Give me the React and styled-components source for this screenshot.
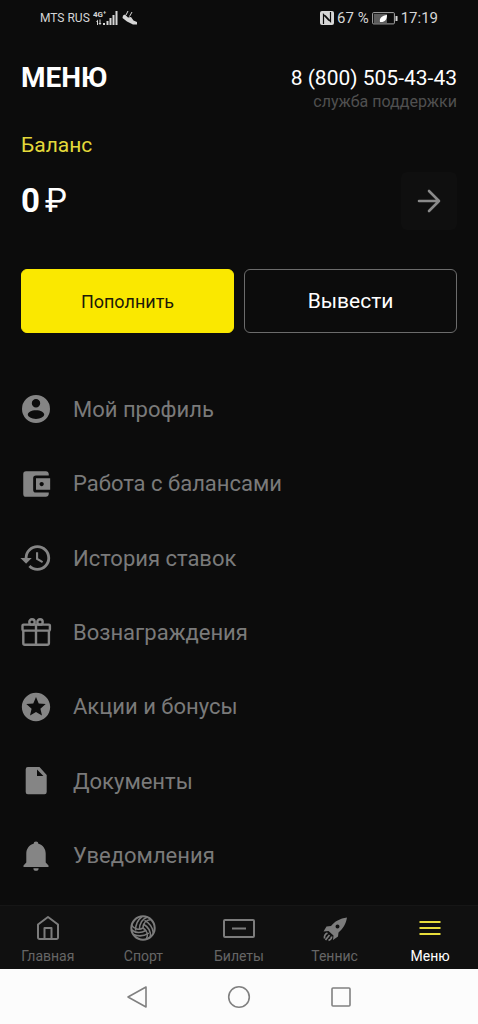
import styled, { createGlobalStyle } from "styled-components";
import { MdAccountBalanceWallet, MdHistory, MdStars } from "react-icons/md";

const colors = {
  page: "#0c0c0c",
  bar: "#101010",
  line: "#161616",
  accent: "#fae800",
  white: "#ffffff",
  status: "#d6d6d6",
  grey: "#7a7a7a",
  icon: "#858585",
  dim: "#505050",
  system: "#fcfcfc",
};

const GlobalStyle = createGlobalStyle`
  *, *::before, *::after {
    box-sizing: border-box;
  }

  body {
    margin: 0;
    background: ${colors.page};
    font-family: Roboto, "Noto Sans", sans-serif;
  }

  button {
    font-family: inherit;
    cursor: pointer;
  }
`;

// Component Styles

const Screen = styled.div`
  min-height: 100vh;
  display: flex;
  flex-direction: column;
  background: ${colors.page};
  color: ${colors.white};
`;

const StatusBar = styled.div`
  height: 36px;
  padding: 0 40px;
  display: flex;
  align-items: center;
  justify-content: space-between;
  color: ${colors.status};
`;

const StatusGroup = styled.div`
  display: flex;
  align-items: center;
  gap: 3px;
`;

const Carrier = styled.span`
  font-size: 12px;
`;

const StatusText = styled.span`
  font-size: 15px;
`;

const Content = styled.main`
  flex: 1;
  display: flex;
  flex-direction: column;
  padding: 25px 21px 12px;
`;

const Header = styled.header`
  display: flex;
  align-items: flex-start;
  justify-content: space-between;
`;

const Title = styled.h1`
  margin: 0;
  font-size: 28px;
  line-height: 34px;
  font-weight: 700;
`;

const Support = styled.div`
  display: flex;
  flex-direction: column;
  align-items: flex-end;
`;

const Phone = styled.a`
  font-size: 21px;
  line-height: 34px;
  color: ${colors.white};
  text-decoration: none;
`;

const SupportLabel = styled.span`
  font-size: 16px;
  line-height: 14px;
  color: ${colors.dim};
`;

const BalanceLabel = styled.h2`
  margin: 24px 0 0;
  font-size: 21px;
  line-height: 24px;
  font-weight: 400;
  color: #e4d93a;
`;

const BalanceRow = styled.div`
  display: flex;
  align-items: center;
  justify-content: space-between;
  margin-top: 15px;
`;

const Amount = styled.div`
  display: flex;
  align-items: center;
  gap: 5px;
  font-size: 33px;
  line-height: 40px;
  font-weight: 700;
`;

const Currency = styled.span`
  font-weight: 400;
`;

const ArrowButton = styled.button`
  width: 56px;
  height: 58px;
  padding: 0;
  border: none;
  border-radius: 6px;
  background: #0f0f0f;
  color: #8a8a8a;
  display: flex;
  align-items: center;
  justify-content: center;
`;

const Actions = styled.div`
  display: grid;
  grid-template-columns: 1fr 1fr;
  gap: 10px;
  margin-top: 39px;
`;

const ActionButton = styled.button`
  height: 64px;
  border-radius: 6px;
  border: 1px solid ${(props) => (props.$filled ? colors.accent : "#6c6c6c")};
  background: ${(props) => (props.$filled ? colors.accent : "transparent")};
  color: ${(props) => (props.$filled ? "#1c1a08" : colors.white)};
  font-size: ${(props) => (props.$filled ? "18px" : "21px")};
`;

const MenuList = styled.nav`
  flex: 1;
  display: flex;
  flex-direction: column;
  margin-top: 39px;
`;

const MenuLink = styled.a`
  flex: 1;
  min-height: 56px;
  display: flex;
  align-items: center;
  gap: 20px;
  margin-left: -2px;
  font-size: 22px;
  color: ${colors.grey};
  text-decoration: none;

  svg {
    color: ${colors.icon};
  }
`;

const TabBar = styled.nav`
  display: grid;
  grid-template-columns: repeat(5, 1fr);
  height: 64px;
  background: ${colors.bar};
  border-top: 1px solid ${colors.line};
`;

const Tab = styled.a`
  display: flex;
  flex-direction: column;
  align-items: center;
  padding-top: 8px;
  gap: 6px;
  font-size: 14px;
  line-height: 16px;
  color: ${(props) => (props.$active ? colors.white : "#666666")};
  text-decoration: none;

  svg {
    color: ${(props) => (props.$active ? "#e8de3c" : "#7c7c7c")};
  }
`;

const SystemBar = styled.div`
  height: 55px;
  display: flex;
  align-items: center;
  justify-content: center;
  gap: 74px;
  background: ${colors.system};
`;

const SystemButton = styled.button`
  width: 28px;
  height: 28px;
  padding: 0;
  border: none;
  background: none;
  color: #808080;
`;

// Icons

const MenuIcon = ({ children }) => (
  <svg width="34" height="34" viewBox="0 0 34 34" fill="currentColor" aria-hidden="true">
    {children}
  </svg>
);

const LineIcon = ({ children, width = 28 }) => (
  <svg
    width={width}
    height="28"
    viewBox={`0 0 ${width} 28`}
    fill="none"
    stroke="currentColor"
    strokeWidth="2"
    strokeLinejoin="round"
    aria-hidden="true"
  >
    {children}
  </svg>
);

const ProfileIcon = () => (
  <MenuIcon>
    <path
      fillRule="evenodd"
      d="M17 3a14 14 0 1 0 0 28a14 14 0 1 0 0-28zM17 7.1a4.2 4.2 0 1 1 0 8.4a4.2 4.2 0 1 1 0-8.4zM17 18.3c4.6 0 8.2 2 8.2 4.3s-3.6 4.3-8.2 4.3s-8.2-2-8.2-4.3s3.6-4.3 8.2-4.3z"
    />
  </MenuIcon>
);

const GiftIcon = () => (
  <MenuIcon>
    <g fill="none" stroke="currentColor" strokeWidth="2.4">
      <rect x="3.5" y="9.6" width="27.4" height="6" rx="1" />
      <path d="M4.3 15.6V28.3a1.5 1.5 0 0 0 1.5 1.5H28.4a1.5 1.5 0 0 0 1.5-1.5V15.6M17 9.6V30" />
      <circle cx="13" cy="6.9" r="2.7" />
      <circle cx="21" cy="6.9" r="2.7" />
    </g>
  </MenuIcon>
);

const DocumentIcon = () => (
  <MenuIcon>
    <path
      fillRule="evenodd"
      d="M9 3H20.5L27.7 11V28a2.2 2.2 0 0 1-2.2 2.2H9A2.2 2.2 0 0 1 6.7 28V5.2A2.2 2.2 0 0 1 9 3zM18 5.4V12H24.4z"
    />
  </MenuIcon>
);

const BellIcon = () => (
  <MenuIcon>
    <path d="M17 2.5a2.4 2.4 0 0 1 2.4 2.3C23.8 6 26.7 9.8 26.7 14.5V23.5L29.5 26.6V28H4.5V26.6L7.3 23.5V14.5C7.3 9.8 10.2 6 14.6 4.8A2.4 2.4 0 0 1 17 2.5z" />
    <path d="M14.4 29.2H19.6A2.6 2.6 0 0 1 14.4 29.2z" />
  </MenuIcon>
);

const HomeIcon = () => (
  <LineIcon>
    <path d="M14 3L24 10.5V23.5a1.5 1.5 0 0 1-1.5 1.5H5.5A1.5 1.5 0 0 1 4 23.5V10.5z" />
    <path d="M10.5 25V14H17.5V25" />
  </LineIcon>
);

const BallIcon = () => (
  <LineIcon>
    <circle cx="14" cy="14" r="11.7" />
    <g strokeWidth="1.6">
      {[0, 120, 240].map((angle) => (
        <g key={angle} transform={`rotate(${angle} 14 14)`}>
          <path d="M14 14C14 9.5 17 6 22 5.5" />
          <path d="M10.4 15.8C10.4 9.5 13 5 18.5 3" />
          <path d="M6.6 16.5C6.4 11 8 6.5 13 2.6" />
        </g>
      ))}
    </g>
  </LineIcon>
);

const TicketIcon = () => (
  <LineIcon width={34}>
    <rect x="2" y="6" width="30" height="17" rx="1" />
    <path d="M10 14.5H24" />
  </LineIcon>
);

const RocketIcon = () => (
  <svg width="28" height="28" viewBox="0 0 28 28" fill="currentColor" aria-hidden="true">
    <path
      fillRule="evenodd"
      d="M26 3.5C19 4.5 13.5 7.5 10 12L5.5 12.5L2.5 17.5L7.5 17L12.5 21.500L12 26L17 22.5L17.5 18.5C22 14.5 25 10 26 3.5zM16.500 10.500a2 2 0 1 1 0 4a2 2 0 1 1 0-4z"
    />
    <path
      d="M6.500 19Q3 20.500 3.500 24.500M8.500 21L4.500 26M10.500 22.500Q11 25 7.500 26.500"
      fill="none"
      stroke="currentColor"
      strokeWidth="1.700"
    />
  </svg>
);

const BurgerIcon = () => (
  <LineIcon>
    <path d="M3.5 8H24.5M3.5 14H24.5M3.5 20H24.5" strokeWidth="2.2" />
  </LineIcon>
);

const ArrowIcon = () => (
  <svg
    width="28"
    height="28"
    viewBox="0 0 28 28"
    fill="none"
    stroke="currentColor"
    strokeWidth="2.6"
    strokeLinecap="round"
    strokeLinejoin="round"
    aria-hidden="true"
  >
    <path d="M4 14H24M14 4L24 14L14 24" />
  </svg>
);

const SignalIcon = () => (
  <svg width="26" height="16" viewBox="0 0 26 16" fill="currentColor" aria-hidden="true">
    <text x="0" y="7" fontSize="8" fontWeight="700">4G⁺</text>
    <path d="M3 12L5 9.5V15H4V12zM7 15L5.5 13H6.5V9.500H7.500V13H8.500zM10 13H12V15H10zM13.5 11H15.5V15H13.5zM16.5 8H18.5V15H16.5zM19.5 5H21.5V15H19.5zM22.5 1H24.500V15H22.500z" />
  </svg>
);

const ShoeIcon = () => (
  <svg width="16" height="14" viewBox="0 0 16 14" fill="currentColor" aria-hidden="true">
    <path d="M1 4.5L3 3.500L6 6.500L9 6L11.500 9.500L15 11V13.500H11L5 10.500L0.500 7z" />
    <path d="M4 4L6 0M7.500 5.500L10 1" stroke="currentColor" fill="none" />
  </svg>
);

const NfcIcon = () => (
  <svg width="14" height="14" viewBox="0 0 14 14" aria-hidden="true">
    <rect width="14" height="14" rx="2" fill="currentColor" />
    <path
      d="M3.5 13V3.500L9 9.500M5 4.500L10.500 10.500V1"
      fill="none"
      stroke={colors.page}
      strokeWidth="1.2"
    />
  </svg>
);

const BatteryIcon = () => (
  <svg width="26" height="13" viewBox="0 0 26 13" fill="none" aria-hidden="true">
    <rect x="0.6" y="0.6" width="21.8" height="11.3" rx="1" stroke="#a8a8a8" />
    <path d="M2 2H15V11H2z" fill="#5c5c5c" />
    <path d="M8 10C7 6 10 3.5 15 3C15 8 12.5 10.5 8 10z" fill={colors.white} />
    <path d="M24.5 4V9" stroke="currentColor" strokeWidth="2" />
  </svg>
);

const menuItems = [
  { label: "Мой профиль", icon: <ProfileIcon /> },
  { label: "Работа с балансами", icon: <MdAccountBalanceWallet size={34} /> },
  { label: "История ставок", icon: <MdHistory size={34} /> },
  { label: "Вознаграждения", icon: <GiftIcon /> },
  { label: "Акции и бонусы", icon: <MdStars size={34} /> },
  { label: "Документы", icon: <DocumentIcon /> },
  { label: "Уведомления", icon: <BellIcon /> },
];

const tabs = [
  { label: "Главная", icon: <HomeIcon /> },
  { label: "Спорт", icon: <BallIcon /> },
  { label: "Билеты", icon: <TicketIcon /> },
  { label: "Теннис", icon: <RocketIcon /> },
  { label: "Меню", icon: <BurgerIcon />, active: true },
];

/** Account menu screen of the app */
function App() {
  return (
    <Screen>
      <GlobalStyle />
      <StatusBar>
        <StatusGroup>
          <Carrier>MTS RUS</Carrier>
          <SignalIcon />
          <ShoeIcon />
        </StatusGroup>
        <StatusGroup>
          <NfcIcon />
          <StatusText>67 %</StatusText>
          <BatteryIcon />
          <StatusText>17:19</StatusText>
        </StatusGroup>
      </StatusBar>
      <Content>
        <Header>
          <Title>МЕНЮ</Title>
          <Support>
            <Phone href="tel:88005054343">8 (800) 505-43-43</Phone>
            <SupportLabel>служба поддержки</SupportLabel>
          </Support>
        </Header>
        <BalanceLabel>Баланс</BalanceLabel>
        <BalanceRow>
          <Amount>
            0<Currency>₽</Currency>
          </Amount>
          <ArrowButton aria-label="Открыть баланс">
            <ArrowIcon />
          </ArrowButton>
        </BalanceRow>
        <Actions>
          <ActionButton $filled>Пополнить</ActionButton>
          <ActionButton>Вывести</ActionButton>
        </Actions>
        <MenuList>
          {menuItems.map((item) => (
            <MenuLink key={item.label} href="#">
              {item.icon}
              {item.label}
            </MenuLink>
          ))}
        </MenuList>
      </Content>
      <TabBar>
        {tabs.map((tab) => (
          <Tab key={tab.label} href="#" $active={tab.active}>
            {tab.icon}
            {tab.label}
          </Tab>
        ))}
      </TabBar>
      <SystemBar>
        <SystemButton aria-label="Назад">
          <LineIcon>
            <path d="M5 14L23 4V24z" strokeWidth="1.6" />
          </LineIcon>
        </SystemButton>
        <SystemButton aria-label="Домой">
          <LineIcon>
            <circle cx="14" cy="14" r="10.3" strokeWidth="1.6" />
          </LineIcon>
        </SystemButton>
        <SystemButton aria-label="Недавние">
          <LineIcon>
            <rect x="5" y="5" width="18" height="18" rx="1" strokeWidth="1.6" />
          </LineIcon>
        </SystemButton>
      </SystemBar>
    </Screen>
  );
}

export default App;
